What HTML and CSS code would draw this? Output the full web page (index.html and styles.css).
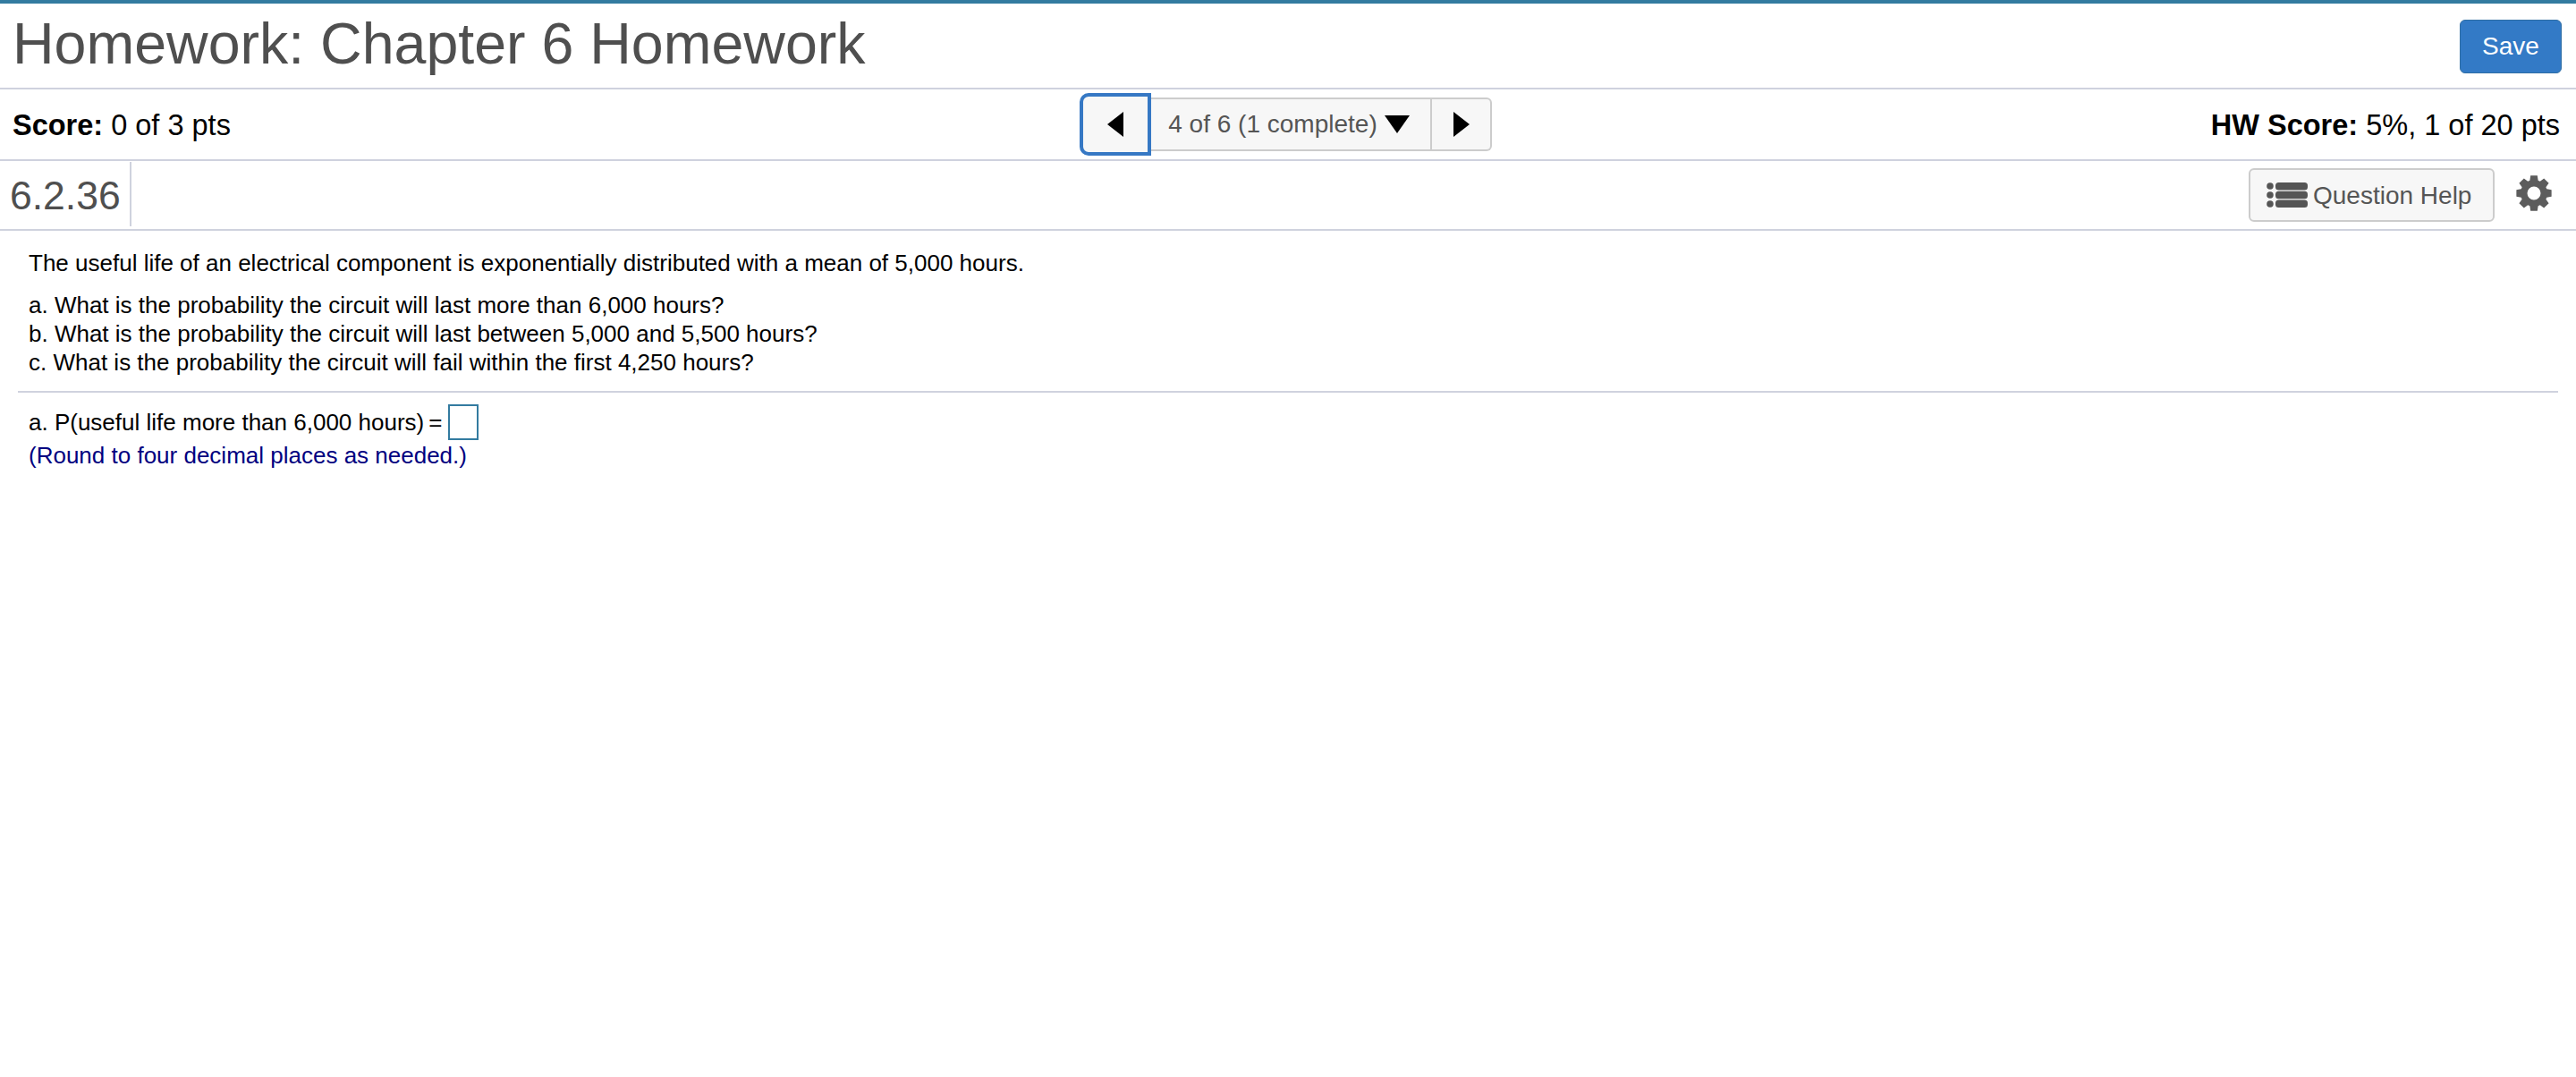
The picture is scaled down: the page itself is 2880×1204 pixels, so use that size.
FILE: index.html
```html
<!DOCTYPE html>
<html lang="en">
<head>
<meta charset="utf-8">
<title>Homework: Chapter 6 Homework</title>
<link rel="stylesheet" href="styles.css">
</head>
<body>
<header class="title-bar">
  <h1 class="title">Homework: Chapter 6 Homework</h1>
  <button class="save-btn">Save</button>
</header>
<section class="score-bar">
  <div class="score"><b>Score:</b> 0 of 3 pts</div>
  <nav class="pager">
    <button class="pager-prev" aria-label="Previous">
      <svg class="arrow" viewBox="0 0 18 28"><path d="M18 0V28L0 14Z"/></svg>
    </button>
    <button class="pager-current">4 of 6 (1 complete)
      <svg class="caret" viewBox="0 0 28 20"><path d="M0 0H28L14 20Z"/></svg>
    </button>
    <button class="pager-next" aria-label="Next">
      <svg class="arrow" viewBox="0 0 18 28"><path d="M0 0V28L18 14Z"/></svg>
    </button>
  </nav>
  <div class="hw-score"><b>HW Score:</b> 5%, 1 of 20 pts</div>
</section>
<section class="question-bar">
  <div class="question-id">6.2.36</div>
  <div class="tools">
    <button class="help-btn">
      <svg class="list-icon" viewBox="0 0 46 28">
        <circle cx="4" cy="4" r="3.800"/><circle cx="4" cy="14" r="3.800"/><circle cx="4" cy="24" r="3.800"/>
        <rect x="10" y="0" width="36" height="8.600" rx="3.500"/><rect x="10" y="9.700" width="36" height="8.600" rx="3.500"/><rect x="10" y="19.400" width="36" height="8.600" rx="3.500"/>
      </svg>
      <span class="help-label">Question Help</span>
    </button>
    <svg class="gear" viewBox="0 0 40 40">
      <path fill-rule="evenodd" d="M15.36 5.73L16.18 .37H23.82L24.64 5.73L26.81 6.63L31.18 3.42L36.58 8.82L33.37 13.19L34.27 15.36L39.63 16.18V23.82L34.27 24.64L33.37 26.81L36.58 31.18L31.18 36.58L26.81 33.37L24.64 34.27L23.82 39.63H16.18L15.36 34.27L13.19 33.37L8.82 36.58L3.42 31.18L6.63 26.81L5.73 24.64L.37 23.82V16.18L5.73 15.36L6.63 13.19L3.42 8.82L8.82 3.42L13.19 6.63ZM20 12.500a7.500 7.500 0 1 0 0 15 7.500 7.500 0 0 0 0-15z"/>
    </svg>
  </div>
</section>
<main class="content">
  <p class="intro">The useful life of an electrical component is exponentially distributed with a mean of 5,000 hours.</p>
  <p class="parts">a. What is the probability the circuit will last more than 6,000 hours?<br>b. What is the probability the circuit will last between 5,000 and 5,500 hours?<br>c. What is the probability the circuit will fail within the first 4,250 hours?</p>
  <hr class="rule">
  <div class="answer">a. P(useful life more than 6,000 hours)<span class="equals">=</span><span class="answer-box"></span></div>
  <p class="hint">(Round to four decimal places as needed.)</p>
</main>
</body>
</html>
```
FILE: styles.css
```css
* { box-sizing: border-box; }
html, body { margin: 0; padding: 0; }
body {
  font-family: "Liberation Sans", Arial, sans-serif;
  background: #fff;
  color: #000;
  border-top: 4px solid #337ba0;
}
button { font-family: inherit; cursor: pointer; }
.title-bar {
  height: 96px;
  display: flex;
  align-items: center;
  justify-content: space-between;
  padding: 0 16px 0 14px;
  border-bottom: 2px solid #cfd2de;
}
.title {
  margin: 0 0 4px;
  font-size: 64.5px;
  font-weight: 400;
  line-height: 1;
  color: #4f4f4f;
}
.save-btn {
  width: 114px;
  height: 60px;
  margin-top: 2px;
  border: 1px solid #2e6da4;
  border-radius: 6px;
  background: #337ac6;
  color: #fff;
  font-size: 28px;
  padding: 0;
}
.score-bar {
  height: 80px;
  display: grid;
  grid-template-columns: 1fr auto 1fr;
  align-items: center;
  padding: 0 18px 0 14px;
  border-bottom: 2px solid #cfd2de;
  font-size: 32.5px;
}
.score, .hw-score { padding-top: 2px; }
.hw-score { text-align: right; }
.pager {
  display: flex;
  align-items: center;
  height: 60px;
  margin-left: -1px;
}
.pager button {
  height: 60px;
  background: #f7f7f7;
  border: 2px solid #ccc;
  padding: 0;
  display: flex;
  align-items: center;
  justify-content: center;
  color: #555;
  font-size: 28px;
}
.pager .pager-prev {
  width: 80px;
  height: 70px;
  border: 4px solid #3678c4;
  border-radius: 10px 0 0 10px;
  position: relative;
  z-index: 1;
}
.pager .pager-current {
  width: 314px;
  border-width: 2px 2px 2px 0;
  gap: 8px;
  padding-right: 4px;
}
.pager .pager-next {
  width: 67px;
  border-width: 2px 2px 2px 0;
  border-radius: 0 6px 6px 0;
}
.arrow { width: 18px; height: 28px; fill: #000; }
.caret { width: 28px; height: 20px; fill: #000; }
.question-bar {
  height: 78px;
  display: flex;
  align-items: center;
  justify-content: space-between;
  border-bottom: 2px solid #cfd2de;
}
.question-id {
  height: 72px;
  margin-top: -2px;
  width: 147px;
  padding-left: 11px;
  border-right: 2px solid #cfd2de;
  font-size: 44.5px;
  line-height: 75px;
  color: #4f4f4f;
}
.tools {
  display: flex;
  align-items: center;
  gap: 24px;
  padding-right: 27px;
}
.help-btn {
  width: 275px;
  height: 60px;
  display: flex;
  align-items: center;
  gap: 6px;
  padding: 0 0 0 18px;
  background: #f7f7f7;
  border: 2px solid #ccc;
  border-radius: 6px;
  color: #555;
  font-size: 28px;
}
.help-label { padding-top: 2px; }
.list-icon { width: 46px; height: 28px; fill: #555; }
.gear { width: 40px; height: 40px; fill: #5c5c5c; margin-top: -4px; }
.content {
  padding: 20px 20px 0 20px;
  font-size: 26px;
  line-height: 32px;
}
.content p { margin: 0; }
.intro, .parts, .answer, .hint { padding-left: 12px; }
.intro { margin-bottom: 15px !important; }
.rule {
  margin: 16px 0 13px;
  border: 0;
  border-top: 2px solid #cfd2de;
}
.answer {
  display: flex;
  align-items: center;
  height: 40px;
}
.equals { margin-left: 5px; }
.answer-box {
  width: 34px;
  height: 40px;
  margin-left: 7px;
  border: 2px solid #337ba0;
}
.hint { color: #000080; margin-top: 1px !important; }
```
